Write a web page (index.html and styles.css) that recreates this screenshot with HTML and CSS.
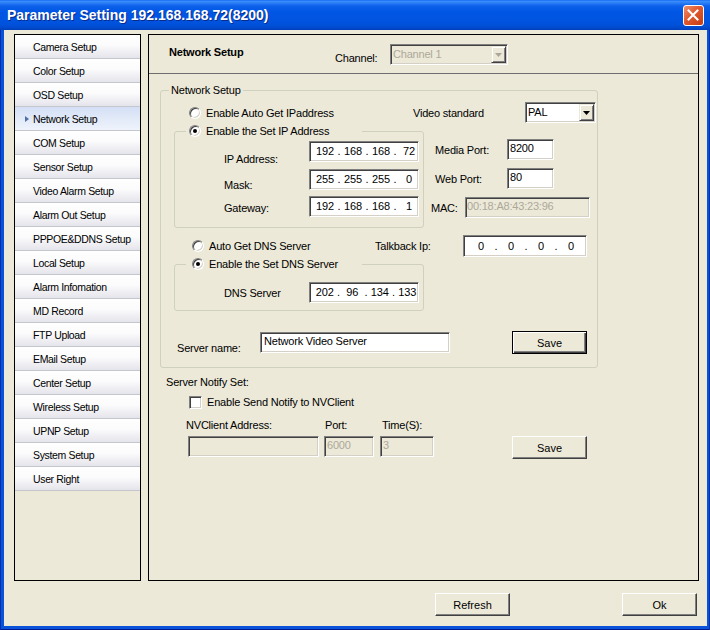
FILE: index.html
```html
<!DOCTYPE html>
<html>
<head>
<meta charset="utf-8">
<link rel="stylesheet" href="styles.css">
</head>
<body>
<div class="window">
  <div class="titlebar">
    <span class="title">Parameter Setting 192.168.168.72(8200)</span>
    <span class="close"><svg width="19" height="19" viewBox="0 0 19 19"><path d="M4.5 4.5 L13.5 13.5 M13.5 4.5 L4.5 13.5" stroke="#fff" stroke-width="2" stroke-linecap="square" fill="none"/></svg></span>
  </div>
  <div class="client">
    <div class="main">
      <ul class="nav">
        <li>Camera Setup</li>
        <li>Color Setup</li>
        <li>OSD Setup</li>
        <li class="sel"><span class="arrow"></span>Network Setup</li>
        <li>COM Setup</li>
        <li>Sensor Setup</li>
        <li>Video Alarm Setup</li>
        <li>Alarm Out Setup</li>
        <li>PPPOE&amp;DDNS Setup</li>
        <li>Local Setup</li>
        <li>Alarm Infomation</li>
        <li>MD Record</li>
        <li>FTP Upload</li>
        <li>EMail Setup</li>
        <li>Center Setup</li>
        <li>Wireless Setup</li>
        <li>UPNP Setup</li>
        <li>System Setup</li>
        <li>User Right</li>
      </ul>
      <div class="panel">
        <div class="panel-head">
          <div class="panel-title">Network Setup</div>
          <div class="ch-label">Channel:</div>
          <div class="combo combo-ch dis">
            <span class="combo-text">Channel 1</span>
            <span class="combo-btn"><svg width="7" height="4" viewBox="0 0 7 4"><polygon points="0,0 7,0 3.5,4" fill="#aca899"/></svg></span>
          </div>
        </div>
        <div class="panel-body">
          <fieldset class="grp grp-net">
            <legend class="lg-net">Network Setup</legend>
            <div class="row-a">
              <span class="radio"></span>
              <span class="opt-a">Enable Auto Get IPaddress</span>
              <span class="vs-label">Video standard</span>
              <div class="combo combo-pal">
                <span class="combo-text">PAL</span>
                <span class="combo-btn"><svg width="7" height="4" viewBox="0 0 7 4"><polygon points="0,0 7,0 3.5,4" fill="#000"/></svg></span>
              </div>
            </div>
            <div class="row-b">
              <fieldset class="grp grp-ip">
                <legend class="lg-sub lg-ip"><span class="lg"><span class="radio on"></span>Enable the Set IP Address</span></legend>
                <div class="iprow">
                  <span class="iplabel l1">IP Address:</span>
                  <div class="ip"><span class="seg">192</span><span class="dot">.</span><span class="seg">168</span><span class="dot">.</span><span class="seg">168</span><span class="dot">.</span><span class="seg">72</span></div>
                </div>
                <div class="iprow">
                  <span class="iplabel l2">Mask:</span>
                  <div class="ip"><span class="seg">255</span><span class="dot">.</span><span class="seg">255</span><span class="dot">.</span><span class="seg">255</span><span class="dot">.</span><span class="seg">0</span></div>
                </div>
                <div class="iprow">
                  <span class="iplabel l3">Gateway:</span>
                  <div class="ip"><span class="seg">192</span><span class="dot">.</span><span class="seg">168</span><span class="dot">.</span><span class="seg">168</span><span class="dot">.</span><span class="seg">1</span></div>
                </div>
              </fieldset>
              <div class="ports">
                <div class="prow"><span class="plabel">Media Port:</span><span class="edit edit-port">8200</span></div>
                <div class="prow"><span class="plabel">Web Port:</span><span class="edit edit-port">80</span></div>
                <div class="prow mac"><span class="plabel">MAC:</span><span class="edit edit-mac dis">00:18:A8:43:23:96</span></div>
              </div>
            </div>
            <div class="row-c">
              <span class="radio"></span>
              <span class="opt-c">Auto Get DNS Server</span>
              <span class="tb-label">Talkback Ip:</span>
              <div class="ip ip-wide"><span class="seg">0</span><span class="dot">.</span><span class="seg">0</span><span class="dot">.</span><span class="seg">0</span><span class="dot">.</span><span class="seg">0</span></div>
            </div>
            <fieldset class="grp grp-dns">
              <legend class="lg-sub lg-dns"><span class="lg"><span class="radio on"></span>Enable the Set DNS Server</span></legend>
              <div class="iprow">
                <span class="iplabel l4">DNS Server</span>
                <div class="ip ip-dns"><span class="seg">202</span><span class="dot">.</span><span class="seg">96</span><span class="dot">.</span><span class="seg">134</span><span class="dot">.</span><span class="seg">133</span></div>
              </div>
            </fieldset>
            <div class="row-e">
              <span class="sn-label">Server name:</span>
              <span class="edit edit-sn">Network Video Server</span>
              <span class="btn btn-def btn-save1">Save</span>
            </div>
          </fieldset>
          <div class="notify-title">Server Notify Set:</div>
          <div class="notify-check"><span class="check"></span>Enable Send Notify to NVClient</div>
          <div class="notify-labels">
            <span class="nl-addr">NVClient Address:</span>
            <span class="nl-port">Port:</span>
            <span>Time(S):</span>
          </div>
          <div class="notify-inputs">
            <span class="edit dis edit-nv"></span>
            <span class="edit dis edit-np">6000</span>
            <span class="edit dis edit-nt">3</span>
            <span class="btn btn-save2">Save</span>
          </div>
        </div>
      </div>
    </div>
    <div class="footer">
      <span class="btn">Refresh</span>
      <span class="btn">Ok</span>
    </div>
  </div>
</div>
</body>
</html>
```

FILE: styles.css
```css
* { box-sizing: border-box; }
html, body { margin: 0; padding: 0; }
body {
  width: 710px;
  height: 630px;
  overflow: hidden;
  font-family: "Liberation Sans", Arial, sans-serif;
  font-size: 11px;
  letter-spacing: -0.2px;
  color: #000;
  background: #0a50d8;
}
.window {
  width: 710px;
  height: 630px;
  display: flex;
  flex-direction: column;
  background: #0b52da;
  box-shadow: inset 1px 0 #0030a8, inset -1px 0 #0030a8, inset 0 -1px #001a90;
}
.titlebar {
  height: 30px;
  flex: none;
  display: flex;
  justify-content: space-between;
  align-items: flex-start;
  background: linear-gradient(180deg, #0a5ff2 0px, #3d90fa 1px, #2a7ef5 3px, #0c60ea 6px, #0056e4 12px, #0054e0 20px, #0051da 25px, #0049cc 28px, #0040b8 30px);
}
.title {
  color: #fff;
  font-weight: bold;
  font-size: 14px;
  letter-spacing: 0;
  line-height: 17px;
  margin: 7px 0 0 7px;
  text-shadow: 1px 1px #0c2a8a;
}
.close {
  width: 21px;
  height: 21px;
  margin: 5px 6px 0 0;
  border: 1px solid #fff;
  border-radius: 3px;
  background: linear-gradient(135deg, #f0906c 0%, #e0582e 45%, #c53c14 100%);
  display: flex;
  align-items: center;
  justify-content: center;
}
.close svg { display: block; }
.client {
  flex: 1;
  margin: 0 3px 4px 4px;
  background: #ece9d8;
  padding: 4px 8px 0 10px;
  display: flex;
  flex-direction: column;
}
.main { display: flex; height: 547px; gap: 7px; flex: none; }

/* sidebar */
.nav {
  width: 127px;
  height: 547px;
  border: 1px solid #000;
  background: #ece9d8;
  margin: 0;
  padding: 0;
  list-style: none;
}
.nav li {
  height: 24px;
  border-bottom: 1px solid #c6c6ce;
  background: linear-gradient(#ffffff 0%, #fbfbfc 45%, #e4e4eb 100%);
  padding-left: 18px;
  font-size: 10.5px;
  letter-spacing: -0.35px;
  display: flex;
  align-items: center;
  white-space: nowrap;
}
.nav li.sel {
  background: linear-gradient(#d3dff5 0%, #e2eaf8 50%, #eef3fb 100%);
  padding-left: 10px;
}
.arrow {
  width: 0;
  height: 0;
  border-top: 3.5px solid transparent;
  border-bottom: 3.5px solid transparent;
  border-left: 4px solid #4f6fa5;
  margin-right: 4px;
}

/* panel */
.panel {
  width: 551px;
  height: 547px;
  border: 1px solid #000;
}
.panel-head {
  height: 39px;
  border-bottom: 1px solid #6e6e6e;
  display: flex;
  align-items: flex-start;
}
.panel-title {
  font-weight: bold;
  width: 186px;
  padding-left: 20px;
  margin-top: 10.5px;
  line-height: 13px;
}
.ch-label { width: 55px; margin-top: 16.5px; line-height: 13px; }
.combo-ch { width: 118px; margin-top: 9px; }
.panel-body { padding-left: 11px; }

/* sunken controls */
.edit, .ip, .combo, .check, .radio {
  border: 1px solid;
  border-color: #808080 #ffffff #ffffff #808080;
  box-shadow: inset 1px 1px #404040, inset -1px -1px #d4d0c8;
  background: #fff;
}
.edit {
  display: block;
  height: 21px;
  padding-left: 2px;
  line-height: 17px;
  white-space: nowrap;
  overflow: hidden;
  flex: none;
}
.dis { background: #ece9d8; color: #aca899; }
.ip {
  display: flex;
  align-items: center;
  height: 21px;
  width: 110px;
  padding-left: 5px;
  flex: none;
  line-height: 17px;
  overflow: hidden;
}
.seg { width: 20px; text-align: center; flex: none; }
.dot { width: 8px; text-align: center; flex: none; }
.ip-dns .seg { width: 19.5px; }
.ip-wide { width: 124px; height: 22px; padding-left: 6px; }
.ip-wide .seg { width: 22px; }
.combo {
  display: flex;
  height: 21px;
  padding: 1px;
  flex: none;
}
.combo.dis { background: #ece9d8; }
.combo-text { flex: 1; padding-left: 1px; line-height: 17px; white-space: nowrap; }
.combo-btn {
  width: 15px;
  height: 17px;
  background: #ece9d8;
  border: 1px solid;
  border-color: #ece9d8 #404040 #404040 #ece9d8;
  box-shadow: inset 1px 1px #fff, inset -1px -1px #808080;
  display: flex;
  align-items: center;
  justify-content: center;
}
.combo-btn svg { display: block; }
.radio {
  width: 12px;
  height: 12px;
  border-radius: 50%;
  flex: none;
  display: flex;
  align-items: center;
  justify-content: center;
}
.radio.on::after {
  content: "";
  width: 4px;
  height: 4px;
  border-radius: 50%;
  background: #000;
}
.check { width: 13px; height: 13px; flex: none; margin-right: 5px; }

/* buttons */
.btn {
  display: flex;
  align-items: center;
  justify-content: center;
  width: 75px;
  height: 23px;
  background: #ece9d8;
  border: 1px solid;
  border-color: #ffffff #404040 #404040 #ffffff;
  box-shadow: inset -1px -1px #808080;
  flex: none;
  letter-spacing: 0;
}
.btn-def {
  border-color: #000;
  box-shadow: inset 1px 1px #fff, inset -1px -1px #404040, inset -2px -2px #808080;
}

/* group boxes */
.grp {
  margin: 0;
  padding: 0;
  border: 1px solid #d0d0bf;
  border-radius: 3px;
  min-width: 0;
}
legend {
  line-height: 13px;
  height: 13px;
  padding: 0 2px;
  white-space: nowrap;
}
.lg-net { margin-left: 8px; }
.lg-sub { margin-left: 11px; width: 176px; }
.lg-ip { padding: 0 0 0 3px; }
.lg-dns { padding: 0 0 0 6px; }
.lg { display: flex; align-items: center; height: 13px; }
.lg .radio { margin-right: 5px; }

.grp-net { width: 438px; margin-top: 10px; padding-bottom: 13px; }
.row-a {
  display: flex;
  align-items: center;
  height: 21px;
  margin-top: 5px;
  padding-left: 28px;
  white-space: nowrap;
}
.row-a .radio { margin-right: 5px; }
.opt-a { width: 207px; }
.vs-label { width: 112px; }
.combo-pal { width: 71px; }

.row-b { display: flex; align-items: flex-start; margin-top: 1.5px; }
.grp-ip { width: 250px; margin-left: 13px; padding: 3.5px 0 10px 0; }
.iprow { display: flex; align-items: flex-start; height: 21px; }
.iprow + .iprow { margin-top: 6.5px; }
.iplabel { width: 134px; padding-left: 49px; line-height: 13px; flex: none; white-space: nowrap; }
.l1 { margin-top: 11.5px; }
.l2 { margin-top: 10.5px; }
.l3 { margin-top: 5.5px; }
.l4 { margin-top: 4.5px; }

.ports { margin-top: 14.5px; display: flex; flex-direction: column; gap: 8px; white-space: nowrap; }
.prow { display: flex; align-items: center; height: 21px; padding-left: 11px; }
.plabel { width: 72px; flex: none; }
.edit-port { width: 47px; }
.prow.mac { padding-left: 7px; }
.mac .plabel { width: 34px; }
.edit-mac { width: 125px; padding-left: 1px; }

.row-c {
  display: flex;
  align-items: center;
  height: 22px;
  margin-top: 7px;
  padding-left: 31px;
  white-space: nowrap;
}
.row-c .radio { margin-right: 5px; }
.opt-c { width: 166px; }
.tb-label { width: 88px; }

.grp-dns { width: 250px; margin: 0.5px 0 0 13px; padding: 11.5px 0 7px 0; }

.row-e {
  display: flex;
  align-items: flex-start;
  margin-top: 20px;
  padding-left: 16px;
  height: 23px;
  white-space: nowrap;
}
.sn-label { width: 83px; margin-top: 10.5px; line-height: 13px; flex: none; }
.edit-sn { width: 190px; margin-top: 1px; padding-left: 3px; }
.btn-save1 { margin-left: 62px; }

/* notify */
.notify-title { margin-top: 7.5px; padding-left: 6px; line-height: 13px; }
.notify-check {
  display: flex;
  align-items: center;
  height: 13px;
  margin-top: 7px;
  padding-left: 29px;
}
.notify-labels { display: flex; margin-top: 10px; padding-left: 26px; line-height: 13px; }
.nl-addr { width: 139px; }
.nl-port { width: 57px; }
.notify-inputs { display: flex; align-items: flex-start; margin-top: 4.5px; padding-left: 28px; }
.edit-nv { width: 131px; }
.edit-np { width: 50px; margin-left: 5px; }
.edit-nt { width: 54px; margin-left: 6px; }
.btn-save2 { margin-left: 78px; }

/* footer */
.footer {
  display: flex;
  justify-content: flex-end;
  gap: 112px;
  margin-top: 12px;
  padding-right: 2px;
}
```
